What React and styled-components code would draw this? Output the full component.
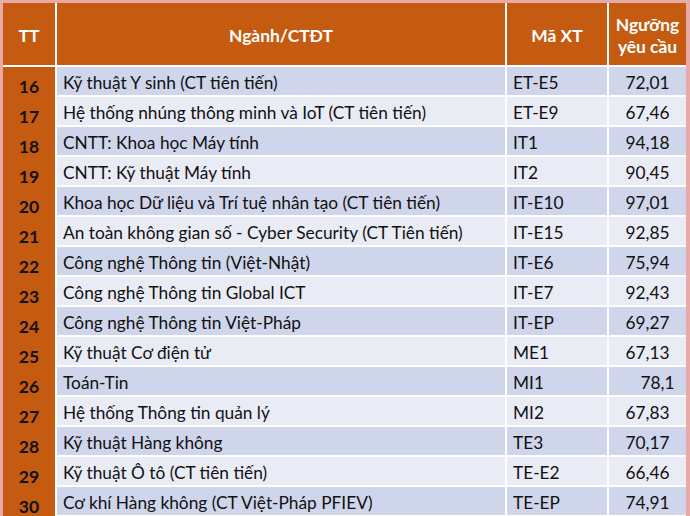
import React from "react";
import styled, { createGlobalStyle } from "styled-components";

const GlobalStyle = createGlobalStyle`
  html, body {
    margin: 0;
    padding: 0;
    background: #e7aaa6;
  }
  body {
    font-family: Lato, "Noto Sans", sans-serif;
  }
`;

const Frame = styled.div`
  width: 690px;
  height: 516px;
  padding: 3px 4px 0 3px;
  box-sizing: border-box;
  background: #e7aaa6;
  overflow: hidden;
`;

const Grid = styled.div`
  display: grid;
  grid-template-columns: 52px 448px 100px 77px;
  grid-auto-rows: 28px;
  grid-template-rows: 62px;
  gap: 2px;
  background: #ffffff;
  padding-bottom: 2px;
`;

const HeadCell = styled.div`
  background: #c55a11;
  color: #ffffff;
  font-weight: 700;
  font-size: 17.4px;
  line-height: 22px;
  display: flex;
  align-items: center;
  justify-content: center;
  text-align: center;
  padding-top: 4px;
`;

const NumCell = styled.div`
  background: #c55a11;
  color: #111111;
  font-weight: 700;
  font-size: 17.5px;
  display: flex;
  align-items: flex-end;
  justify-content: center;
  line-height: 20px;
  margin-bottom: -2px;
  padding-top: 2px;
`;

const Cell = styled.div`
  background: ${(p) => (p.$dark ? "#cfd5ea" : "#e9ebf5")};
  color: #111111;
  font-size: 17.3px;
  display: flex;
  align-items: center;
  justify-content: ${(p) => (p.$center ? "center" : "flex-start")};
  padding: 2px ${(p) => (p.$center ? "0" : "6px")} 0;
  padding-left: ${(p) => (p.$shift ? `${p.$shift}px` : undefined)};
  white-space: nowrap;
`;

const rows = [
  ["16", "Kỹ thuật Y sinh (CT tiên tiến)", "ET-E5", "72,01"],
  ["17", "Hệ thống nhúng thông minh và IoT (CT tiên tiến)", "ET-E9", "67,46"],
  ["18", "CNTT: Khoa học Máy tính", "IT1", "94,18"],
  ["19", "CNTT: Kỹ thuật Máy tính", "IT2", "90,45"],
  ["20", "Khoa học Dữ liệu và Trí tuệ nhân tạo (CT tiên tiến)", "IT-E10", "97,01"],
  ["21", "An toàn không gian số - Cyber Security (CT Tiên tiến)", "IT-E15", "92,85"],
  ["22", "Công nghệ Thông tin (Việt-Nhật)", "IT-E6", "75,94"],
  ["23", "Công nghệ Thông tin Global ICT", "IT-E7", "92,43"],
  ["24", "Công nghệ Thông tin Việt-Pháp", "IT-EP", "69,27"],
  ["25", "Kỹ thuật Cơ điện tử", "ME1", "67,13"],
  ["26", "Toán-Tin", "MI1", "78,1", 20],
  ["27", "Hệ thống Thông tin quản lý", "MI2", "67,83"],
  ["28", "Kỹ thuật Hàng không", "TE3", "70,17"],
  ["29", "Kỹ thuật Ô tô (CT tiên tiến)", "TE-E2", "66,46"],
  ["30", "Cơ khí Hàng không (CT Việt-Pháp PFIEV)", "TE-EP", "74,91"],
];

const App = () => {
  return (
    <>
      <GlobalStyle />
      <Frame>
        <Grid>
          <HeadCell>TT</HeadCell>
          <HeadCell>Ngành/CTĐT</HeadCell>
          <HeadCell>Mã XT</HeadCell>
          <HeadCell>
            Ngưỡng
            <br />
            yêu cầu
          </HeadCell>
          {rows.map((r, i) => {
            const dark = i % 2 === 0;
            return (
              <React.Fragment key={r[0]}>
                <NumCell>{r[0]}</NumCell>
                <Cell $dark={dark}>{r[1]}</Cell>
                <Cell $dark={dark}>{r[2]}</Cell>
                <Cell $dark={dark} $center $shift={r[4]}>
                  {r[3]}
                </Cell>
              </React.Fragment>
            );
          })}
        </Grid>
      </Frame>
    </>
  );
};

export default App;
